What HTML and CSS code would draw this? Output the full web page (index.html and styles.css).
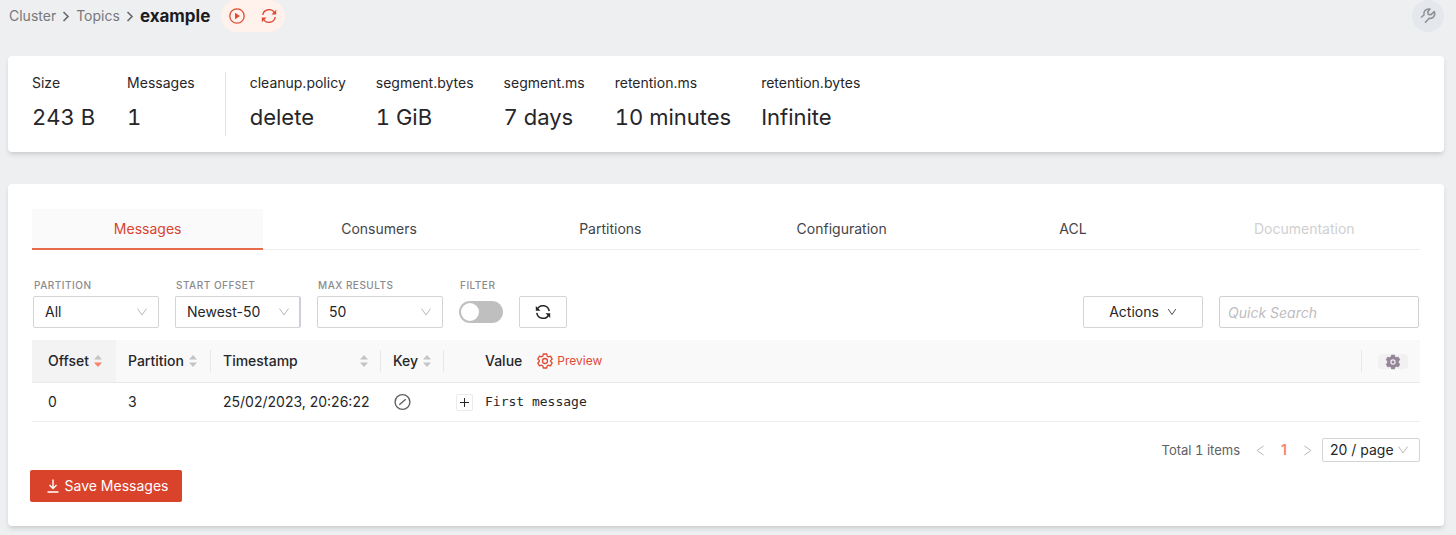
FILE: index.html
```html
<!DOCTYPE html>
<html lang="en">
<head>
<meta charset="utf-8">
<meta name="viewport" content="width=device-width, initial-scale=1">
<title>example - Topics</title>
<link rel="stylesheet" href="styles.css">
</head>
<body>
<svg class="sprite" aria-hidden="true">
  <symbol id="chevron" viewBox="0 0 12 12"><path d="M1.500 2.500 6 9l4.500-6.500" fill="none" stroke="currentColor"/></symbol>
  <symbol id="crumb" viewBox="0 0 8 12"><path d="m1.500 2 4.500 4.500L1.500 11" fill="none" stroke="currentColor" stroke-width="1.700"/></symbol>
  <symbol id="sync" viewBox="0 0 16 16"><path d="M1.800 7A6.300 6.300 0 0 1 13.700 5.200M14.200 9A6.300 6.300 0 0 1 2.300 10.800" fill="none" stroke="currentColor" stroke-width="1.400"/><path d="M15.200 1.800v4.700h-4.700zM.8 14.200V9.500h4.700z" fill="currentColor"/></symbol>
  <symbol id="refresh" viewBox="0 0 16 16"><path d="M2.300 5.200A6.300 6.300 0 0 1 14.200 7.200M13.700 10.800A6.300 6.300 0 0 1 1.800 8.800" fill="none" stroke="currentColor" stroke-width="1.500"/><path d="M.8 2v4.700h4.700zM15.200 14V9.300h-4.700z" fill="currentColor"/></symbol>
  <symbol id="sorter" viewBox="0 0 8 14"><path class="up" d="M4 1 8 5.500H0z"/><path class="down" d="M0 8.500h8L4 13z"/></symbol>
</svg>
<header class="topbar">
  <nav class="crumbs" aria-label="Breadcrumb">
    <a href="#">Cluster</a><svg class="sep"><use href="#crumb"/></svg><a href="#">Topics</a><svg class="sep"><use href="#crumb"/></svg>
    <h1>example</h1>
  </nav>
  <div class="pill">
    <button aria-label="Play"><svg class="i16" viewBox="0 0 16 16"><circle cx="8" cy="8" r="7.200" fill="none" stroke="currentColor" stroke-width="1.300"/><path d="M6 4.800v6.400L11 8z" fill="currentColor"/></svg></button>
    <button aria-label="Refresh"><svg class="i16"><use href="#sync"/></svg></button>
  </div>
  <button class="tools" aria-label="Settings"><svg class="i18" viewBox="0 0 18 18"><path d="M2 10.500 5 8C4.200 4.500 6.500 1.500 11 2L8.700 4.700 9.300 7.400 12 7.600 15.300 4.500C16.800 8.800 13.800 12 10.200 11.200L6 15.800" fill="none" stroke="currentColor" stroke-width="1.600" stroke-linejoin="round"/></svg></button>
</header>
<main>
  <section class="card stats">
    <dl><div><dt>Size</dt><dd>243 B</dd></div><div><dt>Messages</dt><dd>1</dd></div></dl>
    <dl class="config">
      <div><dt>cleanup.policy</dt><dd>delete</dd></div>
      <div><dt>segment.bytes</dt><dd>1 GiB</dd></div>
      <div><dt>segment.ms</dt><dd>7 days</dd></div>
      <div><dt>retention.ms</dt><dd>10 minutes</dd></div>
      <div><dt>retention.bytes</dt><dd>Infinite</dd></div>
    </dl>
  </section>
  <section class="card content">
    <div class="tabs" role="tablist">
      <button role="tab" aria-selected="true">Messages</button>
      <button role="tab">Consumers</button>
      <button role="tab">Partitions</button>
      <button role="tab">Configuration</button>
      <button role="tab">ACL</button>
      <button role="tab" disabled>Documentation</button>
    </div>
    <div class="toolbar">
      <div class="field"><label for="partition">PARTITION</label><div class="select"><select id="partition"><option>All</option></select><svg class="arrow"><use href="#chevron"/></svg></div></div>
      <div class="field"><label for="start">START OFFSET</label><div class="select offset"><select id="start"><option>Newest-50</option></select><svg class="arrow"><use href="#chevron"/></svg></div></div>
      <div class="field"><label for="max">MAX RESULTS</label><div class="select"><select id="max"><option>50</option></select><svg class="arrow"><use href="#chevron"/></svg></div></div>
      <div class="field"><label for="filter">FILTER</label><div class="switch-row"><input class="switch" id="filter" type="checkbox" role="switch"></div></div>
      <button class="btn reload" aria-label="Reload messages"><svg class="i16"><use href="#refresh"/></svg></button>
      <button class="btn actions">Actions <svg class="i10"><use href="#chevron"/></svg></button>
      <input class="search" type="text" placeholder="Quick Search" aria-label="Quick Search">
    </div>
    <table>
      <colgroup><col class="c-offset"><col class="c-part"><col class="c-time"><col class="c-key"><col class="c-expand"><col><col class="c-set"></colgroup>
      <thead><tr>
        <th class="first sorted"><div class="head">Offset<svg class="sort desc"><use href="#sorter"/></svg></div></th>
        <th><div class="head line">Partition<svg class="sort"><use href="#sorter"/></svg></div></th>
        <th><div class="head spread line">Timestamp<svg class="sort"><use href="#sorter"/></svg></div></th>
        <th><div class="head line">Key<svg class="sort"><use href="#sorter"/></svg></div></th>
        <th></th>
        <th><div class="head line">Value<button class="preview"><svg class="i16" viewBox="0 0 16 16"><g fill="none" stroke="currentColor" stroke-width="1.300" stroke-linejoin="round"><path d="M6.300 1h3.400l.5 2.100 1.200.7 2.100-.6 1.700 2.900L13.700 7.500v1l1.500 1.400-1.700 2.900-2.100-.6-1.200.7L9.700 15H6.300l-.5-2.100-1.200-.7-2.100.6L.8 9.900l1.500-1.400v-1L.8 6.100l1.700-2.900 2.100.6 1.200-.7z"/><circle cx="8" cy="8" r="2.500"/></g></svg>Preview</button></div></th>
        <th class="settings"><button class="gear" aria-label="Column settings"><svg class="i16" viewBox="0 0 16 16"><path fill="currentColor" fill-rule="evenodd" d="M6.300.7h3.400l.6 2 1.100.6 2-.5 1.800 3-1.400 1.500v1.400l1.400 1.500-1.800 3-2-.5-1.100.6-.6 2H6.300l-.6-2-1.100-.6-2 .5-1.800-3 1.400-1.500V7.300L.8 5.800l1.800-3 2 .5 1.100-.6zM8 5.300a2.700 2.700 0 1 0 0 5.400 2.700 2.700 0 0 0 0-5.400zM8 6.500a1.500 1.500 0 1 1 0 3 1.500 1.500 0 0 1 0-3z"/></svg></button></th>
      </tr></thead>
      <tbody><tr>
        <td class="first">0</td><td>3</td><td class="time">25/02/2023, 20:26:22</td>
        <td><svg class="i18 empty" viewBox="0 0 18 18" role="img" aria-label="Empty key"><g fill="none" stroke="currentColor" stroke-width="1.400"><circle cx="9.500" cy="9" r="7.400"/><path d="m6.300 11.700 6.400-5.400"/></g></svg></td>
        <td class="expand"><button class="plus" aria-label="Expand row"><svg class="i9" viewBox="0 0 9 9"><path d="M4.500 0v9M0 4.500h9" stroke="currentColor"/></svg></button></td>
        <td class="value">First message</td><td></td>
      </tr></tbody>
    </table>
    <div class="pager">
      <span>Total 1 items</span>
      <button aria-label="Previous page" disabled><svg class="i10" viewBox="0 0 10 10"><path d="M8.500 1 2 5.500 8.500 10" fill="none" stroke="currentColor"/></svg></button>
      <button class="current">1</button>
      <button aria-label="Next page" disabled><svg class="i10" viewBox="0 0 10 10"><path d="M1.500 1 8 5.500 1.500 10" fill="none" stroke="currentColor"/></svg></button>
      <div class="select small"><select aria-label="Page size"><option>20 / page</option></select><svg class="arrow"><use href="#chevron"/></svg></div>
    </div>
    <button class="save"><svg class="i14" viewBox="0 0 14 14"><path d="M7 .5v9M3.500 6 7 9.500 10.500 6M1.500 13h11" fill="none" stroke="currentColor" stroke-width="1.400"/></svg>Save Messages</button>
  </section>
</main>
</body>
</html>
```
FILE: styles.css
```css
* { box-sizing: border-box; }
body {
  margin: 0;
  padding: 0 12px 8px 8px;
  background: #eeeff1;
  color: #262629;
  font: 14px/20px Inter, "Liberation Sans", sans-serif;
}
.sprite { position: absolute; width: 0; height: 0; }
svg { flex: none; display: block; }
button, input, select { font: inherit; color: inherit; }
button { border: 0; padding: 0; background: none; }
.i9 { width: 9px; height: 9px; }
.i10 { width: 10px; height: 10px; overflow: visible; }
.i14 { width: 14px; height: 14px; }
.i16 { width: 16px; height: 16px; }
.i18 { width: 18px; height: 18px; }

.topbar { display: flex; align-items: center; gap: 11px; height: 32px; margin-bottom: 24px; }
.crumbs { display: flex; align-items: center; gap: 6px; padding-left: 1px; }
.crumbs a { color: #77787b; text-decoration: none; }
.sep { width: 8px; height: 12px; color: #6b6c70; }
h1 { margin: 0; font-size: 17px; line-height: 28px; font-weight: 700; color: #1c1c20; }
.pill { display: flex; align-items: center; height: 32px; border-radius: 16px; background: #fff1eb; color: #e04a33; }
.pill button { width: 32px; height: 32px; display: grid; place-items: center; }
.tools { width: 32px; height: 32px; display: grid; place-items: center; margin-left: auto; border-radius: 50%; background: #e4e7ec; color: #8f9195; }

.card { border-radius: 4px; background: #fff; box-shadow: 0 3px 5px -1px #c7c8cb; }
.stats { display: flex; padding: 16px 24px; margin-bottom: 32px; }
dl { display: flex; gap: 32px; margin: 0; }
.config { gap: 30px; margin-left: 30px; padding-left: 24px; border-left: 1px solid #e2e3e5; }
dt { line-height: 22px; }
dd { margin: 4px 0 0; font-size: 22px; line-height: 38px; font-variant-numeric: tabular-nums; }

.content { padding: 25px 24px 24px; }
.tabs { display: grid; grid-template-columns: repeat(6, 1fr); border-bottom: 1px solid #ededee; }
.tabs button { height: 40px; color: #444447; }
.tabs button[aria-selected="true"] { height: 41px; margin-bottom: -1px; padding-top: 1px; background: #fafafa; color: #d9432f; border-bottom: 2px solid #e66a4c; }
.tabs button:disabled { color: #d0d0d1; }

.toolbar { display: flex; align-items: flex-end; gap: 16px; margin: 29px 1px 12px; }
.field label { display: block; padding-left: 1px; font-size: 10px; line-height: 12px; font-weight: 500; letter-spacing: 0.5px; color: #8b8b8e; margin-bottom: 5px; }
.select { display: grid; align-items: center; width: 126px; height: 32px; }
.select > * { grid-area: 1 / 1; }
.select select { width: 100%; height: 100%; appearance: none; border: 1px solid #d5d5d8; border-radius: 2px; background: #fff; padding: 0 11px; }
.select .arrow { justify-self: end; width: 12px; height: 12px; margin-right: 11px; color: #b9b9bb; pointer-events: none; }
.offset select { border-right: 2px solid #cfcfd8; }
.switch-row { display: flex; align-items: center; height: 32px; }
.switch { appearance: none; width: 44px; height: 22px; margin: 0; padding: 2px; border-radius: 11px; background: #bfbfbf; }
.switch::before { content: ""; display: block; width: 18px; height: 18px; border-radius: 50%; background: #fff; }
.btn { display: flex; align-items: center; justify-content: center; gap: 8px; height: 32px; border: 1px solid #d5d5d8; border-radius: 2px; background: #fff; }
.reload { width: 48px; }
.actions { width: 120px; margin-left: auto; }
.search { width: 200px; height: 32px; padding: 0 8px; border: 1px solid #d0d0d2; border-radius: 2px; }
.search::placeholder { color: #bdbdbf; font-style: italic; opacity: 1; }

table { width: 100%; table-layout: fixed; border-collapse: separate; border-spacing: 0; }
.c-offset { width: 84px; }
.c-part { width: 95px; }
.c-time { width: 170px; }
.c-key { width: 63px; }
.c-expand { width: 29px; }
.c-set { width: 58px; }
th { height: 43px; padding: 0; text-align: left; font-weight: 500; background: #f9f9f9; border-bottom: 1px solid #e8e8e9; }
td { height: 39px; padding: 0 12px; border-bottom: 1px solid #ededee; }
.first { padding-left: 16px; }
.sorted { background: #f3f3f3; }
.head { display: flex; align-items: center; gap: 5px; height: 22px; padding-left: 12px; }
.first .head { padding-left: 0; }
.line { border-right: 1px solid #e8e8e9; }
.spread { justify-content: space-between; padding-right: 12px; }
.sort { width: 8px; height: 14px; fill: #c4c4c6; }
.desc { --down: #fa8268; }
.down { fill: var(--down, #c4c4c6); }
td.time { white-space: nowrap; padding-right: 0; }
td.expand { padding: 0 0 0 12px; }
.plus { width: 17px; height: 17px; display: grid; place-items: center; border: 1px solid #ebebec; border-radius: 2px; }
.empty { color: #606063; }
td.value { font: 13px/20px "DejaVu Sans Mono", monospace; }
.preview { display: flex; align-items: center; gap: 4px; margin-left: 10px; font-size: 12px; font-weight: 400; color: #e04a33; }
.gear { width: 30px; height: 15px; display: grid; place-items: center; margin: 0 auto; border-radius: 4px; background: #f1f1f1; color: #958699; }
.settings { padding-left: 4px; }

.pager { display: flex; align-items: center; justify-content: flex-end; height: 24px; margin: 16px 0 8px; }
.pager span { margin-right: 8px; font-size: 13px; font-variant-numeric: tabular-nums; color: #606063; }
.pager button { width: 24px; height: 24px; display: grid; place-items: center; color: #b9b9bb; }
.pager .current { color: #fa8268; font-weight: 600; }
.select.small { width: 98px; height: 24px; margin-left: 2px; }
.small select { padding: 0 7px; }
.save { display: flex; align-items: center; justify-content: center; gap: 5px; width: 152px; height: 32px; margin-left: -2px; padding-left: 2px; border-radius: 2px; background: #d9432b; color: #fff; }
```
